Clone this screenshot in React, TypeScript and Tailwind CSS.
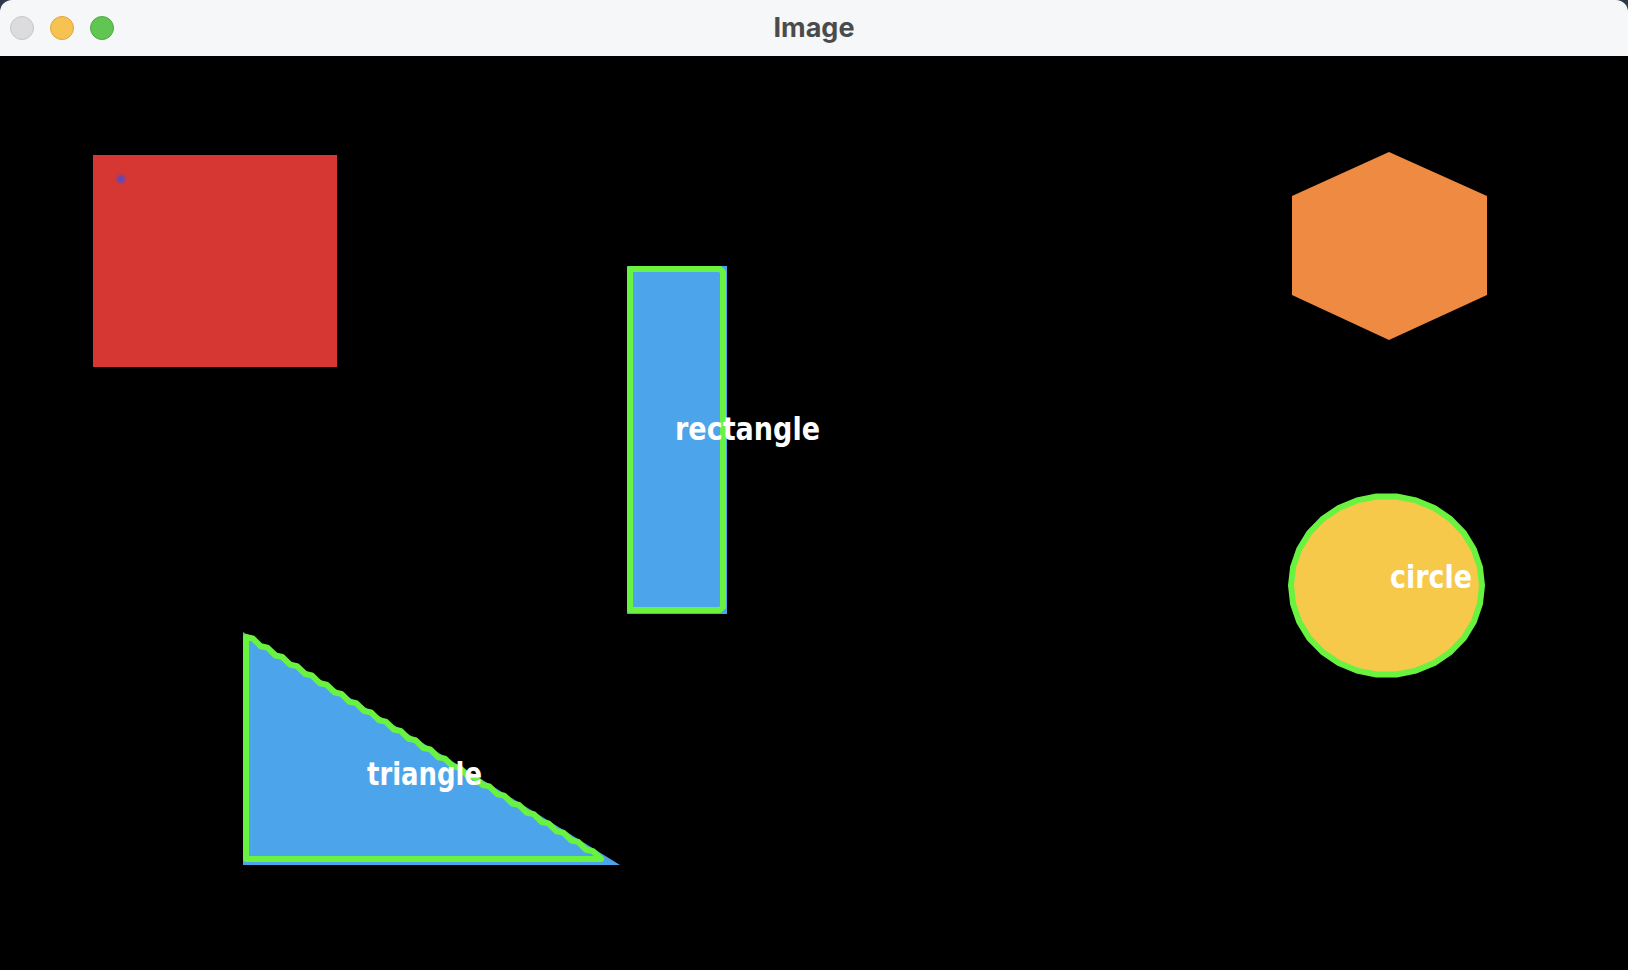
const GREEN = '#69f240';
const BLUE = '#4ca5ea';

const LIGHTS = [
  { name: 'close', bg: 'bg-[#dcdcde]', ring: 'border-[#c6c6c8]' },
  { name: 'min', bg: 'bg-[#f6c251]', ring: 'border-[#e0a63c]' },
  { name: 'max', bg: 'bg-[#61c554]', ring: 'border-[#4dab41]' },
];

// faceted outline like the cv2 contour drawn round the circle
function ellipsePoints(cx: number, cy: number, rx: number, ry: number, n: number) {
  const pts: string[] = [];
  for (let i = 0; i < n; i++) {
    const t = (i / n) * Math.PI * 2;
    pts.push(`${(cx + rx * Math.cos(t)).toFixed(1)},${(cy + ry * Math.sin(t)).toFixed(1)}`);
  }
  return pts.join(' ');
}

// stepped hypotenuse, the contour follows the pixel grid
function stairs(x0: number, y0: number, x1: number, y1: number, step: number) {
  const n = Math.round((x1 - x0) / step);
  const dx = (x1 - x0) / n;
  const dy = (y1 - y0) / n;
  const pts: string[] = [];
  for (let i = 0; i < n; i++) {
    const x = x0 + i * dx;
    const y = y0 + i * dy;
    pts.push(`${x.toFixed(1)},${y.toFixed(1)}`);
    pts.push(`${(x + dx * 0.45).toFixed(1)},${(y + dy * 0.15).toFixed(1)}`);
  }
  pts.push(`${x1},${y1}`);
  return pts.join(' ');
}

function Label({ x, y, w, text }: { x: number; y: number; w: number; text: string }) {
  return (
    <text
      x={0}
      y={0}
      transform={`translate(${x} ${y}) scale(1 1.15)`}
      textLength={w}
      lengthAdjust="spacingAndGlyphs"
      fill="#ffffff"
      fontFamily="'DejaVu Sans', sans-serif"
      fontWeight={700}
      fontSize={28}
    >
      {text}
    </text>
  );
}

function Canvas() {
  return (
    <svg className="block" width={1628} height={914} viewBox="0 56 1628 914">
      <defs>
        <filter id="soft" x="-50%" y="-50%" width="200%" height="200%">
          <feGaussianBlur stdDeviation="1.6" />
        </filter>
      </defs>

      {/* red square */}
      <rect x={93} y={155} width={244} height={212} fill="#d73732" />
      <circle cx={121} cy={179} r={4} fill="#5a48c0" filter="url(#soft)" />

      {/* rectangle */}
      <rect x={627} y={266} width={100} height={348} fill={BLUE} />
      <polygon
        points="630,269 720,269 723,272 723,607 720,610 630,610"
        fill="none"
        stroke={GREEN}
        strokeWidth={6}
        strokeLinejoin="round"
      />
      <Label x={675} y={440} w={145} text="rectangle" />

      {/* hexagon */}
      <polygon
        points="1389,152 1487,196 1487,295 1389,340 1292,295 1292,196"
        fill="#ee8a41"
      />

      {/* circle */}
      <ellipse cx={1386.5} cy={585.5} rx={95} ry={89} fill="#f6c94a" />
      <polygon
        points={ellipsePoints(1386.5, 585.5, 95.5, 89.5, 30)}
        fill="none"
        stroke={GREEN}
        strokeWidth={6}
        strokeLinejoin="round"
      />
      <Label x={1390} y={588} w={82} text="circle" />

      {/* triangle */}
      <polygon points="243,632 243,865 620,865" fill={BLUE} />
      <polyline
        points={`601,859 246,859 ${stairs(246, 637, 601, 859, 15)}`}
        fill="none"
        stroke={GREEN}
        strokeWidth={6}
        strokeLinejoin="round"
        strokeLinecap="round"
      />
      <Label x={367} y={785} w={115} text="triangle" />
    </svg>
  );
}

export default function App() {
  return (
    <div className="w-[1628px] h-[970px] bg-[#2e3a4c] overflow-hidden">
      <div className="flex flex-col h-full rounded-t-[12px] overflow-hidden">
        {/* title bar */}
        <div className="h-[56px] shrink-0 bg-[#f6f7f9] grid grid-cols-[1fr_auto_1fr] items-center">
          <div className="flex items-center gap-4 pl-[10px]">
            {LIGHTS.map((l) => (
              <span key={l.name} className={`w-6 h-6 rounded-full border ${l.bg} ${l.ring}`} />
            ))}
          </div>
          <span className="text-[27px] leading-none font-bold text-[#4b4b4b] font-['Inter',sans-serif] pb-[2px]">
            Image
          </span>
          <div />
        </div>

        {/* image */}
        <div className="flex-1 bg-black">
          <Canvas />
        </div>
      </div>
    </div>
  );
}
